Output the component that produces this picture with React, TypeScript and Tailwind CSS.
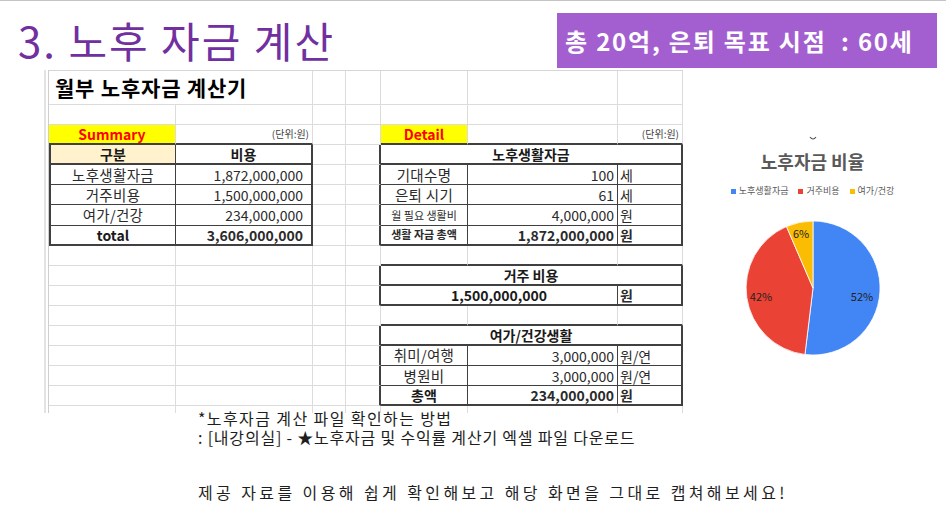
import type { ReactNode } from "react";

type Side = "g" | "d" | "D" | "n";
type Cell = { s?: number; t?: ReactNode; c?: string; r?: Side; b?: Side; l?: boolean };

const rightLine: Record<Side, string> = {
  g: "border-r border-r-[#dcdcdc]",
  d: "border-r border-r-[#404040]",
  D: "border-r-2 border-r-[#404040]",
  n: "",
};
const bottomLine: Record<Side, string> = {
  g: "border-b border-b-[#dcdcdc]",
  d: "border-b border-b-[#404040]",
  D: "border-b-2 border-b-[#404040]",
  n: "",
};
const spans: Record<number, string> = { 1: "", 2: "col-span-2", 3: "col-span-3" };

// cell text styles
const lbl = "justify-center text-[14.5px] tracking-[0.3px] text-[#2b2b2b]";
const small = "justify-center text-[11px] text-[#2b2b2b]";
const head = "justify-center text-[14px] font-bold text-[#1a1a1a]";
const num = "justify-end pr-[8px] text-[14px] text-[#2b2b2b]";
const dnum = "justify-end pr-[3px] text-[14px] text-[#2b2b2b]";
const unit = "pl-[2px] text-[14px] text-[#2b2b2b]";
const yellow = "justify-center bg-[#ffff00] text-[14px] font-bold text-[#ff0000]";
const note = "justify-end pr-[3px] text-[10px] text-[#404040]";

const E: Cell = {};
const blank: Cell[] = [E, E, E, E, E, E, E];
const gap: Cell[] = [E, E, E, E, { b: "D" }, { b: "D" }, { b: "D" }];

const rows: Cell[][] = [
  [{ s: 2, t: "월부 노후자금 계산기", c: "pl-[6px] text-[21px] tracking-[0.8px] font-bold text-black" }, E, E, E, E, E],
  blank,
  [
    { t: "Summary", c: yellow, b: "D" },
    { t: "(단위:원)", c: note, b: "D" },
    E,
    E,
    { t: "Detail", c: yellow, b: "D" },
    { b: "D" },
    { t: "(단위:원)", c: note, b: "D" },
  ],
  [
    { t: "구분", c: head + " bg-[#fff2cc]", l: true, r: "d", b: "D" },
    { t: "비용", c: head, r: "D", b: "D" },
    E,
    { r: "D" },
    { s: 3, t: "노후생활자금", c: head, r: "D", b: "D" },
  ],
  [
    { t: "노후생활자금", c: lbl, l: true, r: "d", b: "d" },
    { t: "1,872,000,000", c: num, r: "D", b: "d" },
    E,
    { r: "D" },
    { t: "기대수명", c: lbl, r: "d", b: "d" },
    { t: "100", c: dnum, r: "d", b: "d" },
    { t: "세", c: unit, r: "D", b: "d" },
  ],
  [
    { t: "거주비용", c: lbl, l: true, r: "d", b: "d" },
    { t: "1,500,000,000", c: num, r: "D", b: "d" },
    E,
    { r: "D" },
    { t: "은퇴 시기", c: lbl, r: "d", b: "d" },
    { t: "61", c: dnum, r: "d", b: "d" },
    { t: "세", c: unit, r: "D", b: "d" },
  ],
  [
    { t: "여가/건강", c: lbl, l: true, r: "d", b: "d" },
    { t: "234,000,000", c: num, r: "D", b: "d" },
    E,
    { r: "D" },
    { t: "월 필요 생활비", c: small, r: "d", b: "d" },
    { t: "4,000,000", c: dnum, r: "d", b: "d" },
    { t: "원", c: unit, r: "D", b: "d" },
  ],
  [
    { t: "total", c: head, l: true, r: "d", b: "D" },
    { t: "3,606,000,000", c: num + " font-bold", r: "D", b: "D" },
    E,
    { r: "D" },
    { t: "생활 자금 총액", c: small + " font-bold", r: "d", b: "D" },
    { t: "1,872,000,000", c: dnum + " font-bold", r: "d", b: "D" },
    { t: "원", c: unit + " font-bold", r: "D", b: "D" },
  ],
  gap,
  [E, E, E, { r: "D" }, { s: 3, t: "거주 비용", c: head, r: "D", b: "D" }],
  [
    E,
    E,
    E,
    { r: "D" },
    { s: 2, t: "1,500,000,000", c: head, r: "d", b: "D" },
    { t: "원", c: unit + " font-bold", r: "D", b: "D" },
  ],
  gap,
  [E, E, E, { r: "D" }, { s: 3, t: "여가/건강생활", c: head, r: "D", b: "D" }],
  [
    E,
    E,
    E,
    { r: "D" },
    { t: "취미/여행", c: lbl, r: "d", b: "d" },
    { t: "3,000,000", c: dnum, r: "d", b: "d" },
    { t: "원/연", c: unit, r: "D", b: "d" },
  ],
  [
    E,
    E,
    E,
    { r: "D" },
    { t: "병원비", c: lbl, r: "d", b: "d" },
    { t: "3,000,000", c: dnum, r: "d", b: "d" },
    { t: "원/연", c: unit, r: "D", b: "d" },
  ],
  [
    E,
    E,
    E,
    { r: "D" },
    { t: "총액", c: head, r: "d", b: "D" },
    { t: "234,000,000", c: dnum + " font-bold", r: "d", b: "D" },
    { t: "원", c: unit + " font-bold", r: "D", b: "D" },
  ],
  [{ b: "n" }, { b: "n" }, { b: "n" }, { b: "n" }, { b: "n" }, { b: "n" }, { b: "n" }],
];

function Sheet() {
  return (
    <div className="ml-[44px] border-l-2 border-[#e3e3e3] pl-[2px]">
      <div className="grid grid-cols-[127px_137px_33px_35px_87px_150px_65px] grid-rows-[34px_repeat(15,20.1px)_7px] border-l border-t border-l-[#cfcfcf] border-t-[#d6d6d6]">
        {rows.flatMap((row, i) =>
          row.map((cell, j) => (
            <div
              key={`${i}-${j}`}
              className={`flex items-center whitespace-nowrap leading-none ${spans[cell.s ?? 1]} ${rightLine[cell.r ?? "g"]} ${bottomLine[cell.b ?? "g"]} ${cell.l ? "border-l-2 border-l-[#404040]" : ""} ${cell.c ?? ""}`}
            >
              {cell.t}
            </div>
          ))
        )}
      </div>
    </div>
  );
}

const legend = [
  { label: "노후생활자금", color: "bg-[#4285f4]" },
  { label: "거주비용", color: "bg-[#ea4335]" },
  { label: "여가/건강", color: "bg-[#fbbc04]" },
];

function PieChart() {
  return (
    <div className="ml-[7px] mt-[66px] flex w-[245px] flex-col items-center">
      <svg width="8" height="5" viewBox="0 0 8 5" aria-hidden>
        <path d="M1 1 Q4 5 7 1" fill="none" stroke="#555" strokeWidth="1.2" />
      </svg>
      <div className="mt-[8px] text-[18px] font-bold leading-[24px] text-[#595959]">노후자금 비율</div>
      <div className="mt-[12px] flex items-center gap-[10px] text-[9px] leading-[12px] text-[#595959]">
        {legend.map((item) => (
          <div key={item.label} className="flex items-center gap-[3px]">
            <span className={`h-[5px] w-[5px] ${item.color}`} />
            <span>{item.label}</span>
          </div>
        ))}
      </div>
      <svg className="mt-[23px]" width="136" height="136" viewBox="0 0 136 136">
        <path d="M68 68 L68 1 A67 67 0 1 1 59.95 134.51 Z" fill="#4285f4" stroke="#fff" strokeWidth="0.8" />
        <path d="M68 68 L59.95 134.51 A67 67 0 0 1 41.47 6.53 Z" fill="#ea4335" stroke="#fff" strokeWidth="0.8" />
        <path d="M68 68 L41.47 6.53 A67 67 0 0 1 68 1 Z" fill="#fbbc04" stroke="#fff" strokeWidth="0.8" />
        <text x="117" y="81" fontSize="11" textAnchor="middle" fill="#222">52%</text>
        <text x="16" y="81" fontSize="11" textAnchor="middle" fill="#222">42%</text>
        <text x="56" y="18" fontSize="11" textAnchor="middle" fill="#222">6%</text>
      </svg>
    </div>
  );
}

export default function App() {
  return (
    <div className="h-[521px] w-[946px] overflow-hidden border-t border-[#c4c4c4] bg-white font-['Noto_Sans_CJK_KR','Noto_Sans',sans-serif]">
      <div className="flex h-[69px] items-start">
        <h1 className="ml-[18px] mt-[15px] text-[42px] font-normal leading-[48px] tracking-[2px] text-[#7030a0]">3. 노후 자금 계산</h1>
        <div className="ml-auto mr-[9px] mt-[12px] flex h-[55px] w-[380px] items-center bg-[#a35fd0] pl-[8px] text-[24px] font-bold tracking-[1.8px] text-white">
          총 20억, 은퇴 목표 시점&nbsp; : 60세
        </div>
      </div>

      <div className="flex items-start">
        <Sheet />
        <PieChart />
      </div>

      <div className="ml-[198px] mt-[-4px] text-[16px] leading-[19px] text-[#1e1e1e]">
        <p className="tracking-[1.4px]">*노후자금 계산 파일 확인하는 방법</p>
        <p className="tracking-[0.8px]">: [내강의실] - ★노후자금 및 수익률 계산기 엑셀 파일 다운로드</p>
        <p className="mt-[36px] tracking-[3.4px]">제공 자료를 이용해 쉽게 확인해보고 해당 화면을 그대로 캡쳐해보세요!</p>
      </div>
    </div>
  );
}
